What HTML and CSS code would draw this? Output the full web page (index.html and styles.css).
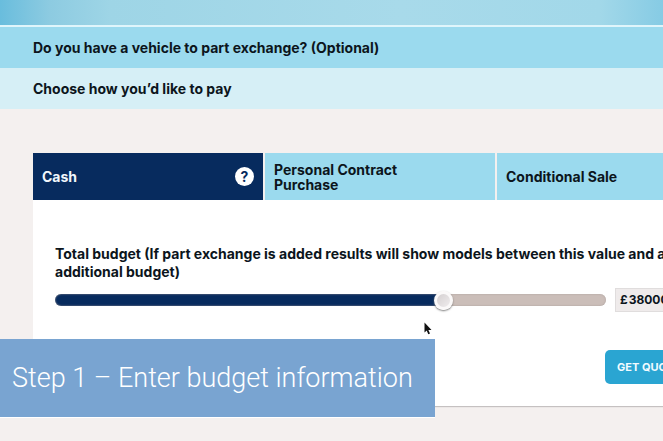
FILE: index.html
```html
<!DOCTYPE html>
<html lang="en">
<head>
<meta charset="utf-8">
<title>Budget</title>
<link rel="stylesheet" href="styles.css">
</head>
<body>
<div class="hero"></div>
<section class="band band-exchange"><h2>Do you have a vehicle to part exchange? (Optional)</h2></section>
<section class="band band-pay"><h2>Choose how you’d like to pay</h2></section>
<main class="finance">
  <div class="tabs" role="tablist">
    <button class="tab tab-active" role="tab" aria-selected="true"><span>Cash</span><span class="help">?</span></button>
    <button class="tab" role="tab" aria-selected="false">Personal Contract<br>Purchase</button>
    <button class="tab" role="tab" aria-selected="false">Conditional Sale</button>
  </div>
  <form class="panel">
    <label class="budget-label" for="budget">Total budget (If part exchange is added results will show models between this value and any additional budget)</label>
    <div class="budget-row">
      <input class="slider" id="budget" type="range" min="0" max="53300" step="100" value="38000">
      <output class="amount" for="budget">£<span>38000</span></output>
    </div>
    <button class="quote" type="button">GET QUOTE</button>
  </form>
</main>
<div class="caption">Step 1 – Enter budget information</div>
<svg class="pointer" viewBox="0 0 8 13" aria-hidden="true"><path d="M.5.5v10l2.2-2 1.6 3.8 1.7-.7-1.6-3.7h3.1z"/></svg>
</body>
</html>
```
FILE: styles.css
```css
* {
  box-sizing: border-box;
}

body {
  margin: 0;
  min-height: 100vh;
  position: relative;
  overflow: hidden;
  background: #f4f0ef;
  color: #0c151c;
  font: 700 14px/18px Inter, "Liberation Sans", sans-serif;
}

button {
  border: 0;
  font: inherit;
  color: inherit;
}

.hero {
  height: 27px;
  border-bottom: 2px solid #dff5fb;
  background: linear-gradient(90deg, #69bddd 0, #8dcbe1 50px, #9ed5e6 110px, #a8daea 400px, #a2d8e9 600px, #86cbe4 100%);
}

.band {
  padding: 12px 33px 11px;
}

.band h2 {
  margin: 0;
  font: inherit;
}

.band-exchange {
  background: #9bdaee;
}

.band-pay {
  background: #d6eff6;
}

.finance {
  margin: 44px -64px 0 33px;
}

.tabs {
  display: grid;
  grid-template-columns: repeat(3, 1fr);
  gap: 2px;
}

.tab {
  display: flex;
  align-items: center;
  justify-content: space-between;
  height: 47px;
  padding: 0 9px;
  background: #9bdaee;
  line-height: 15px;
  text-align: left;
}

.tab-active {
  background: #072b5e;
  color: #f1f7fc;
}

.help {
  width: 19px;
  border-radius: 50%;
  background: #fff;
  color: #072b5e;
  line-height: 19px;
  text-align: center;
}

.panel {
  padding: 45px 22px 22px;
  background: #fff;
  box-shadow: 0 2px 1px -1px #c5c1c1;
}

.budget-label {
  display: block;
}

.budget-row {
  display: flex;
  align-items: center;
  gap: 9px;
  margin-top: 7px;
}

.slider {
  appearance: none;
  flex: 1;
  min-width: 0;
  height: 12px;
  margin: 0;
  border-radius: 6px;
  background: linear-gradient(90deg, #072b5e 71%, #cbbeb9 71%);
  box-shadow: inset 0 0 2px #a89d9a;
}

.slider::-webkit-slider-thumb {
  appearance: none;
  width: 19px;
  height: 19px;
  border: 3px solid #fbf9f9;
  border-radius: 50%;
  background: linear-gradient(135deg, #d5d0d1, #efeced);
  box-shadow: 0 1px 2px #777;
}

.amount {
  display: flex;
  gap: 1px;
  width: 90px;
  padding: 2px 4px;
  border: 1px solid #e0dddd;
  background: #efebeb;
  font-size: 12px;
}

.quote {
  display: block;
  width: 100px;
  height: 34px;
  margin: 38px 0 0 auto;
  padding: 0 12px;
  border-radius: 5px;
  background: #2aa5d2;
  color: #f1fbff;
  font-size: 11px;
  text-align: left;
  white-space: nowrap;
}

.caption {
  position: absolute;
  left: 0;
  bottom: 24px;
  width: 435px;
  padding: 19px 12px;
  background: #79a4d1;
  box-shadow: 0 1px #fff;
  color: #fff;
  font: 300 27px/40px Roboto, "Liberation Sans", sans-serif;
  white-space: nowrap;
}

.pointer {
  position: absolute;
  left: 424px;
  top: 322px;
  width: 8px;
  height: 13px;
  overflow: visible;
  fill: #111;
  stroke: #fff;
  stroke-width: 1px;
  paint-order: stroke;
}
```
